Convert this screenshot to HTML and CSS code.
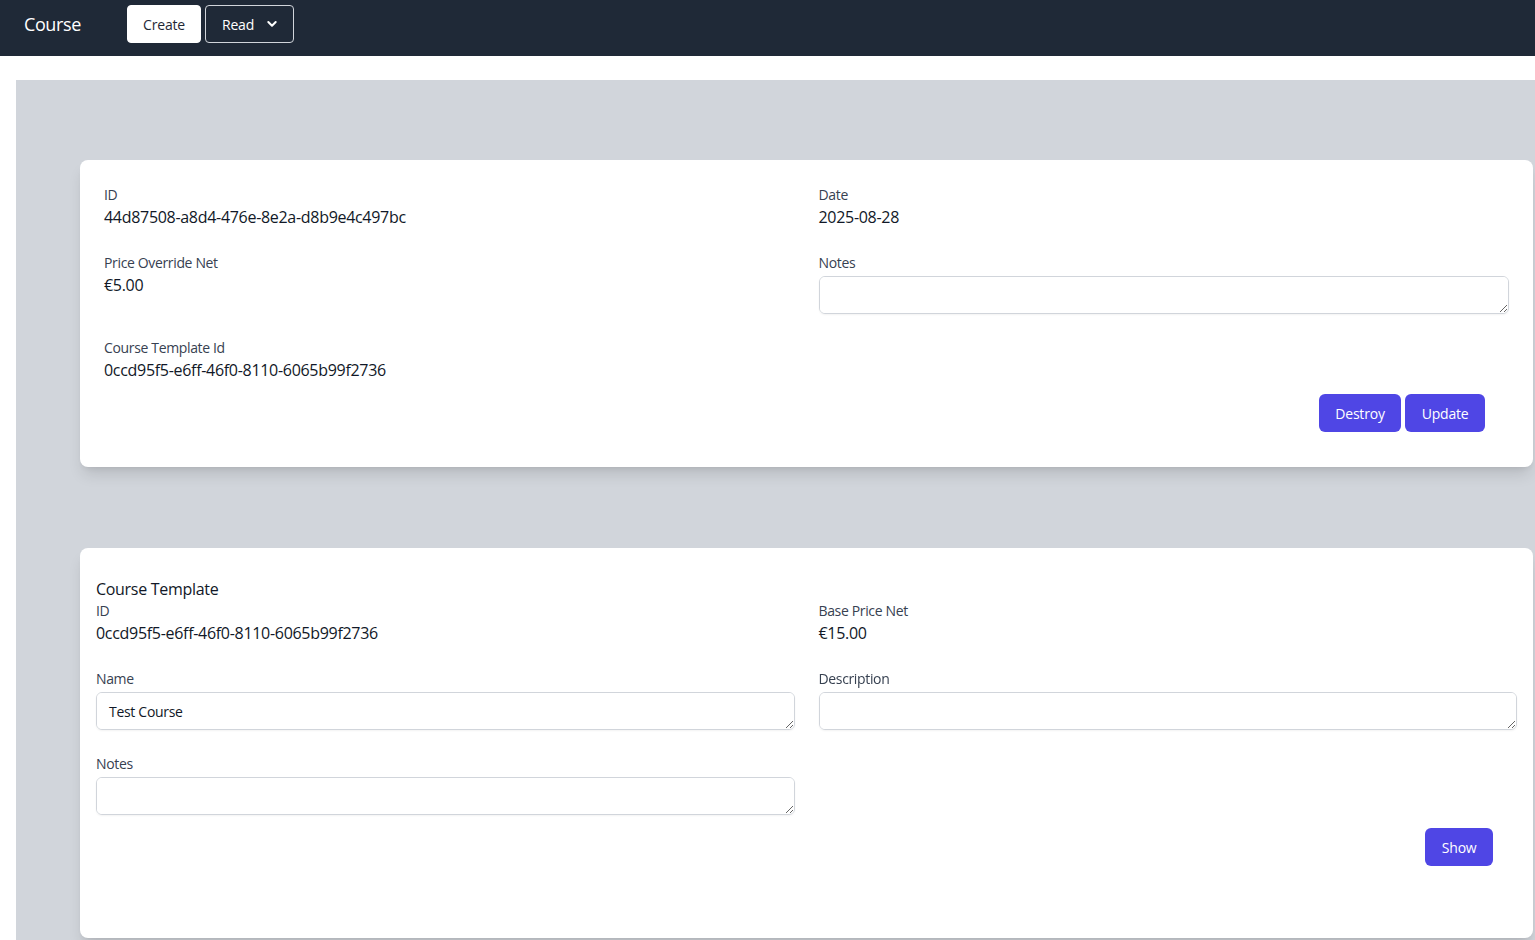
FILE: index.html
```html
<!DOCTYPE html>
<html>
<head>
<meta charset="utf-8">
<link rel="stylesheet" href="styles.css">
</head>
<body>
<nav class="nav">
  <span class="brand">Course</span>
  <button class="nav-btn nav-create">Create</button>
  <button class="nav-btn nav-read">Read
    <svg class="chev" width="12" height="12" viewBox="0 0 12 12"><path d="M2.3 4 L6 7.7 L9.7 4" fill="none" stroke="#fff" stroke-width="2" stroke-linecap="round" stroke-linejoin="round"/></svg>
  </button>
</nav>
<main class="main">
  <section class="card card-one">
    <div class="grid">
      <div class="field">
        <div class="label">ID</div>
        <div class="value">44d87508-a8d4-476e-8e2a-d8b9e4c497bc</div>
      </div>
      <div class="field">
        <div class="label">Date</div>
        <div class="value">2025-08-28</div>
      </div>
      <div class="field">
        <div class="label">Price Override Net</div>
        <div class="value">€5.00</div>
      </div>
      <div class="field">
        <div class="label">Notes</div>
        <textarea class="input"></textarea>
      </div>
      <div class="field">
        <div class="label">Course Template Id</div>
        <div class="value">0ccd95f5-e6ff-46f0-8110-6065b99f2736</div>
      </div>
    </div>
    <div class="actions actions-one">
      <button class="btn">Destroy</button>
      <button class="btn">Update</button>
    </div>
  </section>
  <section class="card card-two">
    <div class="title">Course Template</div>
    <div class="grid">
      <div class="field">
        <div class="label">ID</div>
        <div class="value">0ccd95f5-e6ff-46f0-8110-6065b99f2736</div>
      </div>
      <div class="field">
        <div class="label">Base Price Net</div>
        <div class="value">€15.00</div>
      </div>
      <div class="field">
        <div class="label">Name</div>
        <textarea class="input">Test Course</textarea>
      </div>
      <div class="field">
        <div class="label">Description</div>
        <textarea class="input"></textarea>
      </div>
      <div class="field">
        <div class="label">Notes</div>
        <textarea class="input"></textarea>
      </div>
    </div>
    <div class="actions actions-two">
      <button class="btn">Show</button>
    </div>
  </section>
</main>
</body>
</html>
```
FILE: styles.css
```css
* { box-sizing: border-box; }
html, body { margin: 0; padding: 0; }
body {
  font-family: "Open Sans", "Noto Sans", sans-serif;
  background: #fff;
  color: #111827;
  overflow: hidden;
  height: 940px;
}
.nav {
  height: 56px;
  background: #1f2937;
  display: flex;
  align-items: flex-start;
  padding: 5px 0 0 24px;
}
.brand {
  color: #fff;
  font-size: 18px;
  line-height: 38px;
  width: 103px;
  letter-spacing: -0.4px;
}
.nav-btn {
  font-family: inherit;
  font-size: 14px;
  height: 38px;
  border-radius: 4px;
  cursor: pointer;
  letter-spacing: -0.2px;
}
.nav-create {
  background: #fff;
  color: #1f2937;
  border: 1px solid #fff;
  width: 74px;
  padding: 0;
}
.nav-read {
  background: transparent;
  color: #fff;
  border: 1px solid #d1d5db;
  margin-left: 4px;
  width: 89px;
  display: flex;
  align-items: center;
  padding: 0 0 0 16px;
}
.chev { margin-left: 12px; }
.main {
  margin: 24px 0 0 16px;
  background: #d1d5db;
  padding: 80px 2px 2px 64px;
  height: 860px;
}
.card {
  background: #fff;
  border-radius: 8px;
  box-shadow: 0 10px 15px -3px rgba(0,0,0,0.12), 0 4px 6px -4px rgba(0,0,0,0.1);
}
.card-one {
  padding: 25px 24px 35px 24px;
  height: 307px;
}
.card-two {
  margin-top: 81px;
  padding: 29px 16px 16px 16px;
  height: 390px;
}
.grid {
  display: grid;
  grid-template-columns: 1fr 1fr;
  column-gap: 24px;
  row-gap: 24px;
  align-items: start;
}
.title {
  font-size: 16px;
  line-height: 24px;
  color: #111827;
  letter-spacing: -0.3px;
}
.label {
  font-size: 14px;
  line-height: 20px;
  color: #374151;
  letter-spacing: -0.35px;
}
.value {
  font-size: 16px;
  line-height: 24px;
  color: #111827;
  letter-spacing: -0.3px;
}
.input {
  display: block;
  width: 100%;
  height: 38px;
  margin-top: 3px;
  border: 1px solid #d1d5db;
  border-radius: 6px;
  font-family: inherit;
  font-size: 14px;
  color: #111827;
  padding: 9px 12px 8px;
  line-height: 20px;
  letter-spacing: -0.3px;
  resize: vertical;
  box-shadow: 0 1px 2px rgba(0,0,0,0.05);
}
.actions {
  display: flex;
  justify-content: flex-end;
  gap: 4px;
  padding-right: 24px;
}
.actions-one { margin-top: 12px; }
.actions-two { margin-top: 13px; }
.btn {
  font-family: inherit;
  font-size: 14px;
  height: 38px;
  padding: 0 16.5px;
  background: #4f46e5;
  color: #fff;
  border: none;
  border-radius: 6px;
  letter-spacing: -0.2px;
  cursor: pointer;
}
```
